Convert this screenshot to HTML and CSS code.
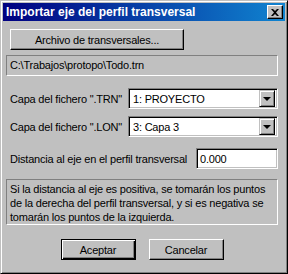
FILE: index.html
```html
<!DOCTYPE html>
<html lang="es">
<head>
    <meta charset="UTF-8">
    <title>Importar eje del perfil transversal</title>
    <link rel="stylesheet" href="styles.css">
</head>
<body>
    <div class="window">
        <div class="titlebar">
            <span class="title">Importar eje del perfil transversal</span>
            <span class="close">
                <svg width="8" height="7" viewBox="0 0 8 7"><path d="M0 0h2l2 2 2-2h2L5 3.5 8 7H6L4 5 2 7H0l3-3.5z" fill="#000"/></svg>
            </span>
        </div>
        <div class="content">
            <div class="btn btn-file">Archivo de transversales...</div>
            <div class="static path">C:\Trabajos\protopo\Todo.trn</div>

            <div class="row row-trn">
                <span class="label">Capa del fichero ".TRN"</span>
                <div class="combo">
                    <span class="combo-text">1: PROYECTO</span>
                    <span class="arrow"><i></i></span>
                </div>
            </div>
            <div class="row row-lon">
                <span class="label">Capa del fichero ".LON"</span>
                <div class="combo">
                    <span class="combo-text">3: Capa 3</span>
                    <span class="arrow"><i></i></span>
                </div>
            </div>
            <div class="row row-dist">
                <span class="label">Distancia al eje en el perfil transversal</span>
                <div class="edit">0.000</div>
            </div>

            <div class="static info">Si la distancia al eje es positiva, se tomarán los puntos de la derecha del perfil transversal, y si es negativa se tomarán los puntos de la izquierda.</div>

            <div class="actions">
                <div class="btn btn-default">Aceptar</div>
                <div class="btn">Cancelar</div>
            </div>
        </div>
    </div>
</body>
</html>
```

FILE: styles.css
```css
body {
    margin: 0;
    font-family: "Liberation Sans", Arial, sans-serif;
    font-size: 11px;
    letter-spacing: -0.2px;
    color: #000;
    background: #c0c0c0;
}
.window {
    width: 288px;
    height: 274px;
    box-sizing: border-box;
    background: #c0c0c0;
    border: 1px solid;
    border-color: #c0c0c0 #000 #000 #c0c0c0;
    box-shadow: inset 1px 1px #fff, inset -1px -1px #808080;
    padding: 2px;
}
.titlebar {
    height: 18px;
    background: linear-gradient(to right, #000080, #1084d0);
    display: flex;
    align-items: center;
    justify-content: space-between;
    padding: 0 2px 0 3px;
}
.title {
    color: #fff;
    font-weight: bold;
    font-size: 12px;
    letter-spacing: 0;
}
.close {
    width: 16px;
    height: 14px;
    box-sizing: border-box;
    background: #c0c0c0;
    border: 1px solid;
    border-color: #fff #000 #000 #fff;
    box-shadow: inset -1px -1px #808080;
    display: flex;
    align-items: center;
    justify-content: center;
}
.content {
    padding: 8px 7px 0 3px;
}
.btn {
    height: 21px;
    box-sizing: border-box;
    border: 1px solid;
    border-color: #fff #000 #000 #fff;
    box-shadow: inset -1px -1px #808080;
    display: flex;
    align-items: center;
    justify-content: center;
    width: 75px;
}
.btn-file {
    width: 174px;
    margin-left: 4px;
}
.btn-default {
    border: 1px solid #000;
    box-shadow: inset 1px 1px #fff, inset -1px -1px #000, inset -2px -2px #808080;
}
.static {
    border: 1px solid;
    border-color: #808080 #fff #fff #808080;
    padding: 0 3px;
}
.path {
    margin-top: 5px;
    height: 19px;
    line-height: 19px;
}
.row {
    display: flex;
    align-items: center;
    justify-content: space-between;
    padding-left: 4px;
}
.row-trn {
    margin-top: 12px;
}
.row-lon {
    margin-top: 7px;
}
.row-dist {
    margin-top: 11px;
}
.combo, .edit {
    height: 21px;
    box-sizing: border-box;
    background: #fff;
    border: 1px solid;
    border-color: #808080 #fff #fff #808080;
    box-shadow: inset 1px 1px #000, inset -1px -1px #c0c0c0;
    display: flex;
    align-items: center;
}
.combo {
    width: 150px;
    padding: 2px;
}
.combo-text {
    flex: 1;
    padding-left: 2px;
}
.arrow {
    width: 16px;
    height: 17px;
    box-sizing: border-box;
    background: #c0c0c0;
    border: 1px solid;
    border-color: #c0c0c0 #000 #000 #c0c0c0;
    box-shadow: inset 1px 1px #fff, inset -1px -1px #808080;
    display: flex;
    align-items: center;
    justify-content: center;
}
.arrow i {
    width: 0;
    height: 0;
    border-left: 4px solid transparent;
    border-right: 4px solid transparent;
    border-top: 4px solid #000;
    margin-top: 1px;
}
.edit {
    width: 82px;
    padding-left: 3px;
}
.info {
    margin-top: 10px;
    height: 46px;
    box-sizing: border-box;
    line-height: 14px;
    padding-top: 2px;
    padding-right: 1px;
}
.actions {
    display: flex;
    justify-content: center;
    gap: 13px;
    margin-top: 14px;
}
```
